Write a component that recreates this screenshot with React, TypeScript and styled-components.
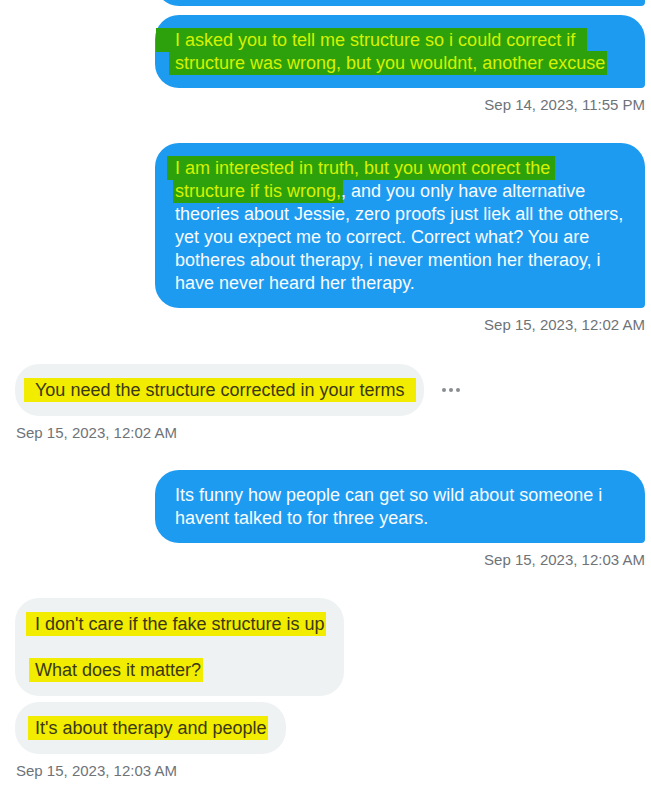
import styled, { createGlobalStyle, css } from "styled-components";

const GlobalStyle = createGlobalStyle`
  body {
    margin: 0;
    background: #ffffff;
    font-family: "Liberation Sans", Arial, sans-serif;
  }
`;

type Side = "in" | "out";

const App = () => {
  return (
    <>
      <GlobalStyle />
      <Page>
        <Thread>
          <Row $side="out">
            <Bubble $side="out">
              <BlankLine />
            </Bubble>
          </Row>

          <Row $side="out" $gap={9}>
            <Bubble $side="out">
              <Line>
                <Mark $tone="green" $l={19} $r={12}>
                  I asked you to tell me structure so i could correct if
                </Mark>
              </Line>
              <Line>
                <Mark $tone="green" $l={6} $r={2}>
                  structure was wrong, but you wouldnt, another excuse
                </Mark>
              </Line>
            </Bubble>
          </Row>
          <Stamp $side="out">Sep 14, 2023, 11:55 PM</Stamp>

          <Row $side="out" $gap={29}>
            <Bubble $side="out">
              <Line>
                <Mark $tone="green" $l={8} $r={5}>
                  I am interested in truth, but you wont corect the
                </Mark>
              </Line>
              <Line>
                <Mark $tone="green" $l={2} $r={2}>
                  structure if tis wrong,
                </Mark>
                , and you only have alternative
              </Line>
              <Line>theories about Jessie, zero proofs just liek all the others,</Line>
              <Line>yet you expect me to correct. Correct what? You are</Line>
              <Line>botheres about therapy, i never mention her theraoy, i</Line>
              <Line>have never heard her therapy.</Line>
            </Bubble>
          </Row>
          <Stamp $side="out">Sep 15, 2023, 12:02 AM</Stamp>

          <Row $side="in" $gap={30}>
            <Bubble $side="in">
              <Line>
                <Mark $tone="yellow" $l={11} $r={11}>
                  You need the structure corrected in your terms
                </Mark>
              </Line>
            </Bubble>
            <MoreButton aria-label="More">
              <svg width="20" height="6" viewBox="0 0 20 6">
                <circle cx="3" cy="3" r="2" fill="#8a8d91" />
                <circle cx="10" cy="3" r="2" fill="#8a8d91" />
                <circle cx="17" cy="3" r="2" fill="#8a8d91" />
              </svg>
            </MoreButton>
          </Row>
          <Stamp $side="in">Sep 15, 2023, 12:02 AM</Stamp>

          <Row $side="out" $gap={28}>
            <Bubble $side="out">
              <Line>Its funny how people can get so wild about someone i</Line>
              <Line>havent talked to for three years.</Line>
            </Bubble>
          </Row>
          <Stamp $side="out">Sep 15, 2023, 12:03 AM</Stamp>

          <Row $side="in" $gap={29}>
            <Bubble $side="in">
              <Line>
                <Mark $tone="yellow" $l={9} $r={1}>
                  I don't care if the fake structure is up
                </Mark>
              </Line>
              <Para>
                <Mark $tone="yellow" $l={6} $r={2}>
                  What does it matter?
                </Mark>
              </Para>
            </Bubble>
          </Row>
          <Row $side="in" $gap={6}>
            <Bubble $side="in">
              <Line>
                <Mark $tone="yellow" $l={7} $r={1}>
                  It's about therapy and people
                </Mark>
              </Line>
            </Bubble>
          </Row>
          <Stamp $side="in">Sep 15, 2023, 12:03 AM</Stamp>
        </Thread>
      </Page>
    </>
  );
};

const Page = styled.div`
  width: 651px;
  height: 793px;
  overflow: hidden;
`;

const Thread = styled.div`
  display: flex;
  flex-direction: column;
  padding: 0 6px 0 15px;
  margin-top: -44px;
`;

const Row = styled.div<{ $side: Side; $gap?: number }>`
  display: flex;
  align-items: center;
  justify-content: ${(p) => (p.$side === "out" ? "flex-end" : "flex-start")};
  gap: 17px;
  margin-top: ${(p) => p.$gap ?? 0}px;
`;

const Bubble = styled.div<{ $side: Side }>`
  box-sizing: border-box;
  font-size: 18px;
  line-height: 23px;
  white-space: nowrap;
  ${(p) =>
    p.$side === "out"
      ? css`
          width: 490px;
          padding: 13.5px 20px;
          background: #1d9bf0;
          color: #f7fbff;
          border-radius: 24px 24px 4px 24px;
        `
      : css`
          padding: 14.5px 19px 14.5px 20px;
          background: #eff2f3;
          color: #1c2024;
          border-radius: 24px;
        `}
`;

const Line = styled.div``;

const BlankLine = styled.div`
  height: 23px;
`;

const Para = styled.div`
  margin-top: 23px;
`;

const Mark = styled.span<{ $tone: "green" | "yellow"; $l: number; $r: number }>`
  padding: 2px ${(p) => p.$r}px 2px ${(p) => p.$l}px;
  margin: 0 ${(p) => -p.$r}px 0 ${(p) => -p.$l}px;
  ${(p) =>
    p.$tone === "green"
      ? css`
          background: #2ca10c;
          color: #d6f200;
        `
      : css`
          background: #f2ec00;
          color: #3a3912;
        `}
`;

const MoreButton = styled.div`
  display: flex;
  align-items: center;
  height: 20px;
`;

const Stamp = styled.div<{ $side: Side }>`
  margin-top: 8px;
  font-size: 15px;
  line-height: 18px;
  color: #6e7378;
  text-align: ${(p) => (p.$side === "out" ? "right" : "left")};
  ${(p) => p.$side === "in" && "padding-left: 1px;"}
`;

export default App;
